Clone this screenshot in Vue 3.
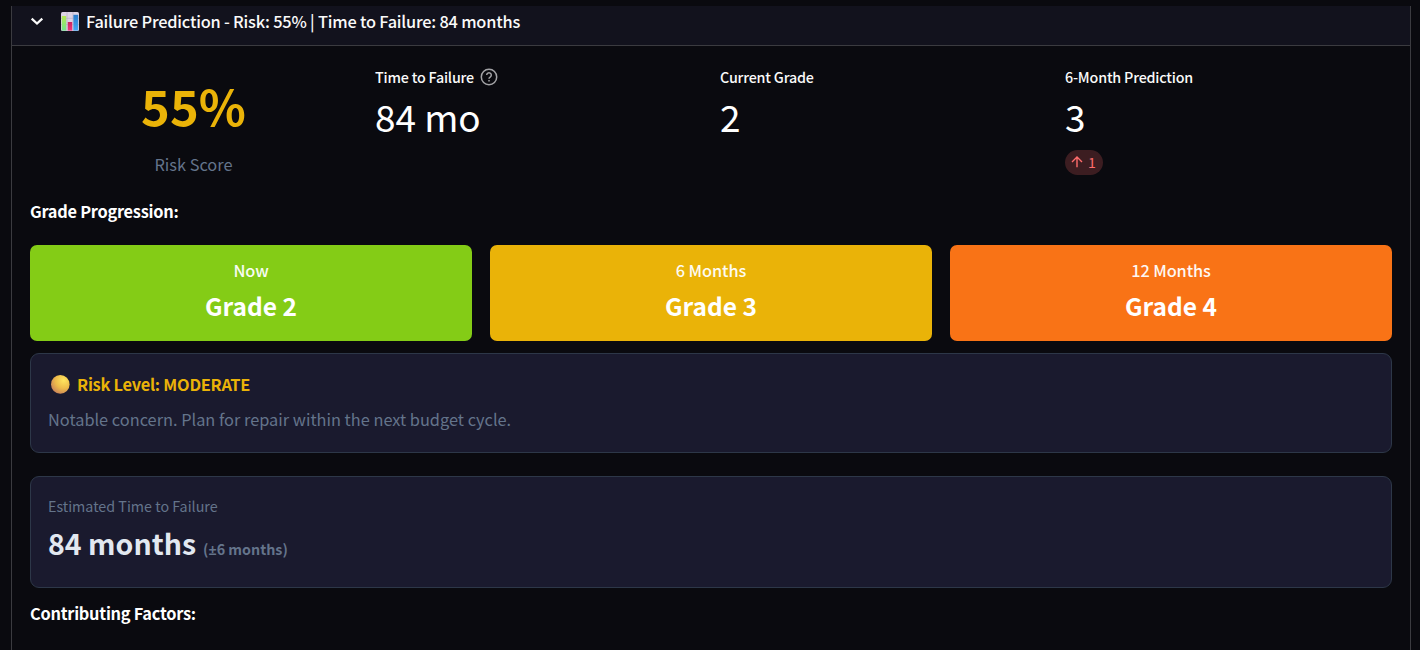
<script setup>
import { ref } from 'vue';

const isOpen = ref(true);

const grades = [
  { when: 'Now', grade: 2, level: 'low' },
  { when: '6 Months', grade: 3, level: 'moderate' },
  { when: '12 Months', grade: 4, level: 'high' }
];

const toggle = () => {
  isOpen.value = !isOpen.value;
}
</script>

<template>
  <div class="page">
    <div class="expander">
      <div class="summary" @click="toggle">
        <svg class="chevron" viewBox="0 0 14 14">
          <path d="M1.7 4.6 L7 9.6 L12.3 4.6" />
        </svg>
        <svg class="chart" viewBox="0 0 18 19">
          <rect width="18" height="19" rx="1.5" fill="#dcd3e4" />
          <path d="M0 6.3H18M0 12.6H18M6 0V19M12 0V19" stroke="#b9afc6" stroke-width="0.7" />
          <rect x="0.8" y="4" width="4.4" height="14.6" fill="url(#green)" />
          <rect x="6.8" y="10" width="4.4" height="8.6" fill="url(#pink)" />
          <rect x="12.4" y="2.8" width="4.8" height="15.8" fill="url(#blue)" />
          <defs>
            <linearGradient id="green" x2="0" y2="1">
              <stop offset="0" stop-color="#b5e853" /><stop offset="1" stop-color="#70e58c" />
            </linearGradient>
            <linearGradient id="pink" x2="0" y2="1">
              <stop offset="0" stop-color="#c8265f" /><stop offset="1" stop-color="#f0387c" />
            </linearGradient>
            <linearGradient id="blue" x2="0" y2="1">
              <stop offset="0" stop-color="#2b7bcb" /><stop offset="1" stop-color="#43a9f5" />
            </linearGradient>
          </defs>
        </svg>
        <span class="title">Failure Prediction - Risk: 55% | Time to Failure: 84 months</span>
      </div>

      <div class="content" v-if="isOpen">
        <div class="metrics">
          <div class="score">
            <div class="score-value">55%</div>
            <div class="score-label">Risk Score</div>
          </div>
          <div class="metric">
            <div class="metric-label">
              <span>Time to Failure</span>
              <svg class="help" viewBox="0 0 18 18">
                <circle cx="9" cy="9" r="7.7" />
                <path d="M6.7 7.1a2.3 2.3 0 1 1 3.5 2c-.8.5-1.2.9-1.2 1.7" />
                <path d="M9 12v1.5" />
              </svg>
            </div>
            <div class="metric-value">84 mo</div>
          </div>
          <div class="metric">
            <div class="metric-label"><span>Current Grade</span></div>
            <div class="metric-value">2</div>
          </div>
          <div class="metric">
            <div class="metric-label"><span>6-Month Prediction</span></div>
            <div class="metric-value">3</div>
            <div class="delta">
              <svg class="arrow" viewBox="0 0 12 12">
                <path d="M6 11.2V1.2M1 6.1L6 1.1L11 6.1" />
              </svg>
              <span>1</span>
            </div>
          </div>
        </div>

        <div class="heading">Grade Progression:</div>

        <div class="grades">
          <div v-for="item in grades" :key="item.when" class="grade" :class="item.level">
            <div class="grade-when">{{ item.when }}</div>
            <div class="grade-value">Grade {{ item.grade }}</div>
          </div>
        </div>

        <div class="card risk">
          <div class="risk-title">
            <svg class="dot" viewBox="0 0 20 20">
              <defs>
                <radialGradient id="gold" cx="0.68" cy="0.28" r="0.8">
                  <stop offset="0" stop-color="#ffe55e" />
                  <stop offset="0.55" stop-color="#eebb4a" />
                  <stop offset="1" stop-color="#c9825a" />
                </radialGradient>
              </defs>
              <circle cx="10.3" cy="10.4" r="9.3" fill="url(#gold)" />
            </svg>
            <span>Risk Level: MODERATE</span>
          </div>
          <div class="risk-text">Notable concern. Plan for repair within the next budget cycle.</div>
        </div>

        <div class="card estimate">
          <div class="estimate-label">Estimated Time to Failure</div>
          <div class="estimate-value">
            <span>84 months</span>
            <span class="range">(<span class="sign">±</span>6 months)</span>
          </div>
        </div>

        <div class="heading factors">Contributing Factors:</div>
      </div>
    </div>
  </div>
</template>

<style>
body {
  background: #0a0a0f;
}
</style>

<style scoped>
.page {
  box-sizing: border-box;
  height: 650px;
  padding: 6px 9px 0 11px;
  overflow: hidden;
  background: #0a0a0f;
  color: #fafafa;
  font-family: "Noto Sans CJK SC", "Noto Sans", sans-serif;
  font-size: 16.35px;
  white-space: nowrap;
}

.expander {
  height: 660px;
  border-left: 1px solid #3b3b40;
  border-right: 1px solid #3b3b40;
}

.summary {
  display: flex;
  align-items: center;
  height: 39px;
  padding-left: 18px;
  border-bottom: 1px solid #3b3b40;
  background: #12121d;
  cursor: pointer;
}

.chevron {
  width: 14px;
  height: 14px;
  margin: -9px 17px 0 0;
  fill: none;
  stroke: #fafafa;
  stroke-width: 2.2;
}

.chart {
  width: 18px;
  height: 19px;
  margin: -8px 7px 0 0;
}

.title {
  margin-top: -9px;
  font-weight: 500;
  letter-spacing: -0.205px;
}

.content {
  padding: 18px 18px 0;
}

.metrics {
  display: grid;
  grid-template-columns: repeat(4, 1fr);
  gap: 18px;
  height: 133px;
}

.score {
  text-align: center;
}

.score-value {
  margin-top: 9px;
  height: 68px;
  line-height: 64px;
  font-size: 48.9px;
  font-weight: 700;
  color: #eab308;
}

.score-label {
  height: 46px;
  line-height: 46px;
  color: #64748b;
}

.metric-label {
  display: flex;
  align-items: center;
  height: 25px;
  gap: 6px;
  font-size: 14.3px;
  font-weight: 500;
  letter-spacing: -0.19px;
}

.help {
  width: 18px;
  height: 18px;
  fill: none;
  stroke: #a3a3a6;
  stroke-width: 1.5;
}

.metric-value {
  height: 60px;
  line-height: 54px;
  font-size: 36.9px;
  color: #fff;
}

.delta {
  display: inline-flex;
  align-items: center;
  box-sizing: border-box;
  height: 25px;
  padding: 0 7px 0 6px;
  gap: 5px;
  border-radius: 13px;
  background: #3c1d21;
  color: #ff6c6c;
  font-size: 14.1px;
}

.arrow {
  width: 12px;
  height: 12px;
  fill: none;
  stroke: #ff6c6c;
  stroke-width: 1.4;
}

.heading {
  height: 28px;
  line-height: 28px;
  color: #fff;
  font-weight: 700;
  letter-spacing: -0.26px;
}

.grades {
  display: grid;
  grid-template-columns: repeat(3, 1fr);
  gap: 18px;
  margin-top: 20px;
}

.grade {
  height: 96px;
  border-radius: 7px;
  color: #fff;
  text-align: center;
}

.low {
  background: #84cc16;
}

.moderate {
  background: #eab308;
}

.high {
  background: #f97316;
}

.grade-when {
  padding-top: 11px;
  height: 28px;
  line-height: 28px;
  font-weight: 500;
  letter-spacing: -0.12px;
  opacity: 0.95;
}

.grade-value {
  height: 44px;
  line-height: 44px;
  font-size: 24.5px;
  font-weight: 700;
}

.card {
  box-sizing: border-box;
  padding: 0 17px;
  border: 1px solid #2d3748;
  border-radius: 9px;
  background: #1a1a2e;
}

.risk {
  height: 100px;
  margin-top: 12px;
  padding-top: 16px;
}

.risk-title {
  display: flex;
  align-items: center;
  height: 28px;
  padding-left: 2px;
  gap: 7px;
  color: #eab308;
  font-weight: 700;
  letter-spacing: -0.25px;
}

.dot {
  width: 20px;
  height: 20px;
}

.risk-text {
  height: 42px;
  line-height: 42px;
  color: #64748b;
}

.estimate {
  height: 112px;
  margin-top: 23px;
  padding-top: 17px;
}

.estimate-label {
  height: 24px;
  line-height: 24px;
  font-size: 14.3px;
  color: #64748b;
}

.estimate-value {
  height: 50px;
  line-height: 50px;
  color: #e2e8f0;
  font-size: 28.5px;
  font-weight: 700;
}

.range {
  margin-left: 7px;
  color: #64748b;
  font-size: 14.3px;
}

.sign {
  font-family: "Noto Sans", sans-serif;
}

.factors {
  margin-top: 11px;
}
</style>
